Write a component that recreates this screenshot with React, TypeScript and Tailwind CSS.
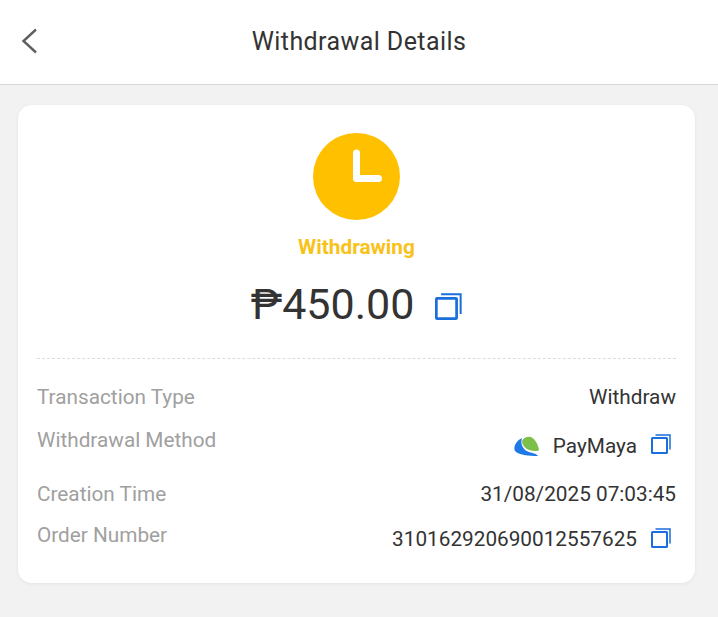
function CopyIcon({ className }: { className: string }) {
  return (
    <svg viewBox="0 0 20 20" fill="none" stroke="#1a6fdc" className={className}>
      <rect x="1" y="4" width="15" height="15" rx="0.5" strokeWidth="2" />
      <path d="M4.5 1H19V15.5" strokeWidth="1.5" />
    </svg>
  )
}

function PayMayaLogo() {
  return (
    <svg viewBox="0 0 26 21" className="h-[21px] w-[26px]">
      <path d="M8 2C2 5-1 11 1 15c3 4 14 5 23 5-1-2-5-3-9-4C9 14 6 8 8 2Z" fill="#1d78e8" />
      <path d="M8 5c1-3 5-5 9-4 4 2 7 7 8 13-1 1-2 1-4 1-7 0-13-4-13-10Z" fill="#7cc04b" />
    </svg>
  )
}

export default function App() {
  return (
    <div className="h-[617px] w-[718px] overflow-hidden bg-[#f2f2f2] font-['Roboto',sans-serif]">
      <header className="relative flex h-[85px] items-center justify-center border-b border-[#d8d8d8] bg-white">
        <svg viewBox="0 0 16 26" fill="none" stroke="#5f5f5f" strokeWidth="2.4" className="absolute left-[21px] top-[28px] h-[26px] w-[16px]">
          <path d="M15 1.5 2.5 13 15 24.5" />
        </svg>
        <h1 className="text-[25px] font-normal tracking-[0.42px] text-[#333]">Withdrawal Details</h1>
      </header>

      <main className="px-[18px] pt-[20px]">
        <section className="h-[478px] w-[677px] rounded-[14px] bg-white px-[19px] pt-[28px] shadow-[0_1px_4px_rgba(0,0,0,0.06)]">
          <div className="flex flex-col items-center">
            <div className="flex h-[87px] w-[87px] items-center justify-center rounded-full bg-[#ffc000]">
              <svg viewBox="0 0 87 87" fill="none" stroke="white" strokeWidth="7" strokeLinecap="round" strokeLinejoin="round" className="h-[87px] w-[87px]">
                <path d="M43.5 20V45.5H65.5" />
              </svg>
            </div>
            <p className="mt-[14px] text-[20.8px] leading-[27px] font-bold text-[#f9c21a]">Withdrawing</p>
            <div className="mt-[18px] flex h-[50px] items-center">
              <span className="text-[43px] leading-[50px] text-[#333]">₱450.00</span>
              <CopyIcon className="ml-[21px] mt-[4px] h-[27px] w-[27px]" />
            </div>
          </div>

          <div className="mt-[29px] border-t border-dashed border-[#dcdcdc]" />

          <dl className="text-[20.75px] leading-[26px]">
            <div className="mt-[25px] flex justify-between">
              <dt className="text-[#a0a0a0]">Transaction Type</dt>
              <dd className="text-[#333]">Withdraw</dd>
            </div>
            <div className="mt-[17px] flex justify-between">
              <dt className="text-[#a0a0a0]">Withdrawal Method</dt>
              <dd className="flex items-center pt-[6px] text-[#333]">
                <PayMayaLogo />
                <span className="ml-[13px]">PayMaya</span>
                <CopyIcon className="ml-[14px] mr-[5px] mt-[-4px] h-[20px] w-[20px]" />
              </dd>
            </div>
            <div className="mt-[22px] flex justify-between">
              <dt className="text-[#a0a0a0]">Creation Time</dt>
              <dd className="text-[#333]">31/08/2025 07:03:45</dd>
            </div>
            <div className="mt-[15px] flex justify-between">
              <dt className="text-[#a0a0a0]">Order Number</dt>
              <dd className="flex items-center pt-[4px] text-[#333]">
                <span>310162920690012557625</span>
                <CopyIcon className="ml-[14px] mr-[5px] mt-[-3px] h-[20px] w-[20px]" />
              </dd>
            </div>
          </dl>
        </section>
      </main>
    </div>
  )
}
